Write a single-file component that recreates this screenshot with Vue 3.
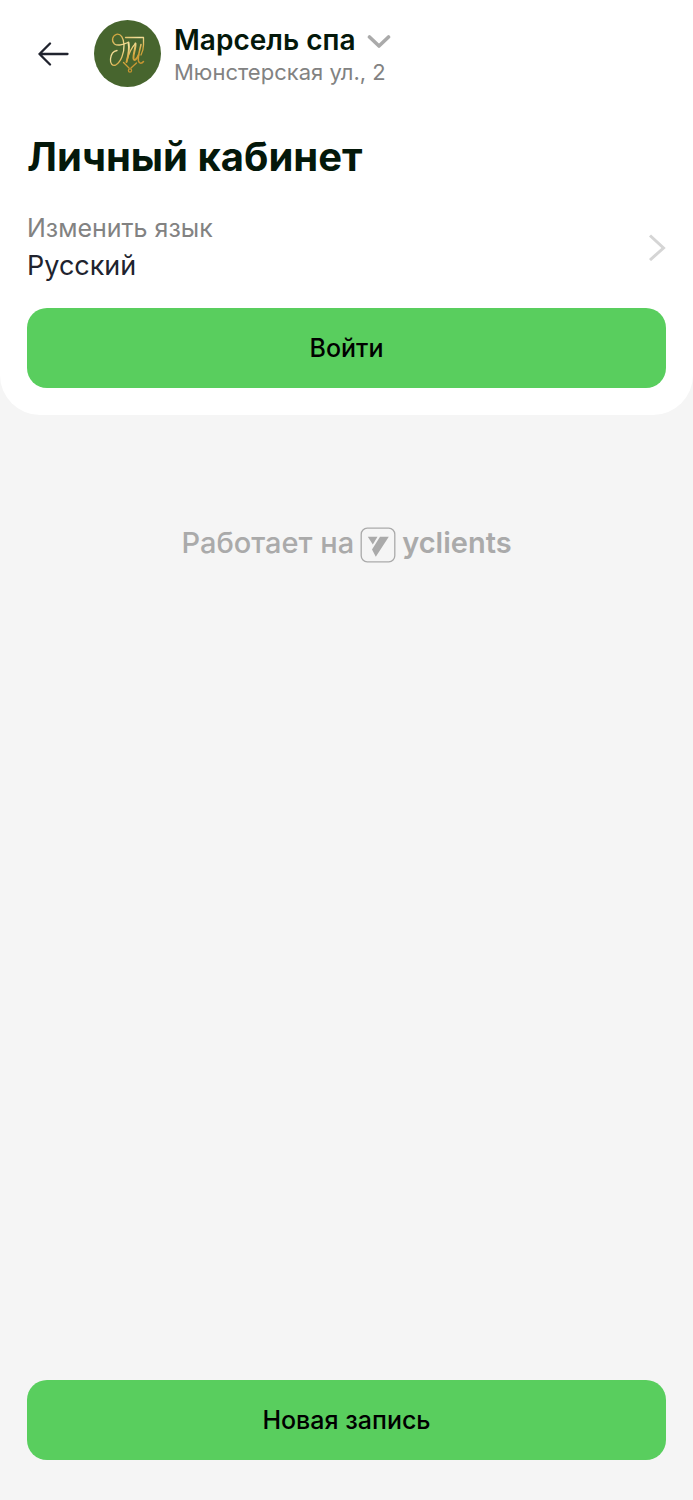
<script setup>
const company = { name: 'Марсель спа', address: 'Мюнстерская ул., 2' }
const language = 'Русский'
</script>

<template>
  <div class="page">
    <div class="card">
      <header class="header">
        <button class="back" type="button" aria-label="Назад">
          <svg width="32" height="24" viewBox="0 0 32 24" fill="none" stroke="#20232e" stroke-width="2.3" stroke-linecap="round" stroke-linejoin="round">
            <path d="M29.500 12H1.500M12 1.500L1.500 12l10.500 10.500" />
          </svg>
        </button>
        <svg class="avatar" viewBox="0 0 67 67" fill="none" role="img" aria-label="Марсель спа">
          <defs>
            <linearGradient id="gold" x1="18" y1="14" x2="44" y2="52" gradientUnits="userSpaceOnUse">
              <stop offset="0" stop-color="#c99a2c" />
              <stop offset=".4" stop-color="#f5e3a0" />
              <stop offset=".65" stop-color="#d6a63c" />
              <stop offset="1" stop-color="#c08a2a" />
            </linearGradient>
          </defs>
          <circle cx="33.500" cy="33.500" r="33.500" fill="#47652e" />
          <g stroke="url(#gold)" stroke-linecap="round" stroke-linejoin="round">
            <path stroke-width="1.300" d="M34 22.500C29 24.500 24 26.500 20.500 24C17 21 18.500 15.500 22.500 14.300C27 13.500 29.500 18 30 25C30.300 33 27 42 22 44.800C18.500 46.500 16 43.500 16.500 39C17 34 19.500 31 23 30.500" />
            <path stroke-width="1.900" d="M34.500 22.500C35.500 28 34 37 32.500 42" />
            <path stroke-width="1.200" d="M32.500 42C34.500 34 38 27 41.500 23.500" />
            <path stroke-width="1.900" d="M41.500 23.500C42 28 39 34 39.500 38.500C40 41.500 43 39.500 44.500 35" />
            <path stroke-width="1.500" d="M47 24.500C46 30 43.500 36 44.500 41C45.500 44.500 48 43.500 49.500 41.500" />
            <path stroke-width="1.300" d="M31.500 17.500H49.500V25C49.500 29 48.500 32 47 35M29.500 42.500L35 48M37 48L42.500 43" />
            <circle stroke-width="1.200" cx="36" cy="50.500" r="1.600" />
          </g>
        </svg>
        <button class="company" type="button">
          <span class="company-name">
            {{ company.name }}
            <svg width="24" height="16" viewBox="0 0 24 16" fill="none" stroke="#aaa" stroke-width="3.600" stroke-linecap="round" stroke-linejoin="round">
              <path d="M2.500 5L12 14L21.500 5" />
            </svg>
          </span>
          <span class="company-address">{{ company.address }}</span>
        </button>
      </header>

      <main>
        <h1>Личный кабинет</h1>
        <button class="language" type="button">
          <span class="language-text">
            <span class="language-label">Изменить язык</span>
            <span class="language-value">{{ language }}</span>
          </span>
          <svg width="18" height="28" viewBox="0 0 18 28" fill="none" stroke="#d5d5d5" stroke-width="3">
            <path d="M2 2.500L15.500 15L2 27" />
          </svg>
        </button>
        <button class="primary" type="button">Войти</button>
      </main>
    </div>

    <a class="powered" href="#">
      <span class="powered-text">Работает на</span>
      <svg width="36" height="36" viewBox="0 0 36 36" fill="none">
        <rect x="1.200" y="1.200" width="33.600" height="33.600" rx="6" stroke="#aaa" stroke-width="1.300" />
        <path fill="#aaa" d="M7.800 9.800H17.500L12.800 17.600ZM20 9.800H28.800L15.800 29.800L12 22.400Z" />
      </svg>
      <span class="powered-text brand">yclients</span>
    </a>

    <footer>
      <button class="primary" type="button">Новая запись</button>
    </footer>
  </div>
</template>

<style>
body {
  background: #f5f5f5;
}
</style>

<style scoped>
.page {
  display: flex;
  flex-direction: column;
  min-height: 100vh;
  font-family: Inter, "Liberation Sans", sans-serif;
  color: #04180a;
}
button {
  margin: 0;
  padding: 0;
  border: 0;
  background: none;
  font: inherit;
  color: inherit;
  text-align: left;
  cursor: pointer;
}
svg {
  display: block;
  flex: none;
}
.card {
  padding: 20px 27px 27px;
  border-radius: 0 0 40px 40px;
  background: #fff;
}
.header {
  display: flex;
  align-items: center;
}
.back {
  display: flex;
  justify-content: center;
  width: 53px;
  padding: 14px 0;
}
.avatar {
  width: 67px;
  height: 67px;
  margin: 0 13px 0 14px;
}
.company {
  display: flex;
  flex-direction: column;
}
.company-name {
  display: flex;
  align-items: center;
  gap: 12px;
  font-size: 28px;
  font-weight: 600;
  line-height: 36px;
}
.company-address {
  font-size: 22px;
  line-height: 28px;
  color: #828282;
}
h1 {
  margin: 45px 0 27px;
  font-size: 40px;
  font-weight: 700;
  line-height: 50px;
}
.language {
  display: flex;
  align-items: center;
  justify-content: space-between;
  width: 100%;
  margin-bottom: 23px;
}
.language-text {
  display: flex;
  flex-direction: column;
}
.language-label {
  font-size: 25px;
  line-height: 38px;
  color: #828282;
}
.language-value {
  font-size: 27px;
  line-height: 38px;
  color: #20232e;
}
.primary {
  display: block;
  width: 100%;
  height: 80px;
  border-radius: 20px;
  background: #59ce5e;
  font-size: 25px;
  font-weight: 500;
  line-height: 32px;
  text-align: center;
  color: #000;
}
.powered {
  display: flex;
  align-items: center;
  align-self: center;
  gap: 6px;
  margin-top: 112px;
  font-size: 29px;
  font-weight: 500;
  line-height: 32px;
  color: #aaa;
  text-decoration: none;
}
.powered-text {
  padding-bottom: 4px;
}
.brand {
  font-weight: 600;
}
footer {
  margin-top: auto;
  padding: 27px 27px 40px;
}
</style>
